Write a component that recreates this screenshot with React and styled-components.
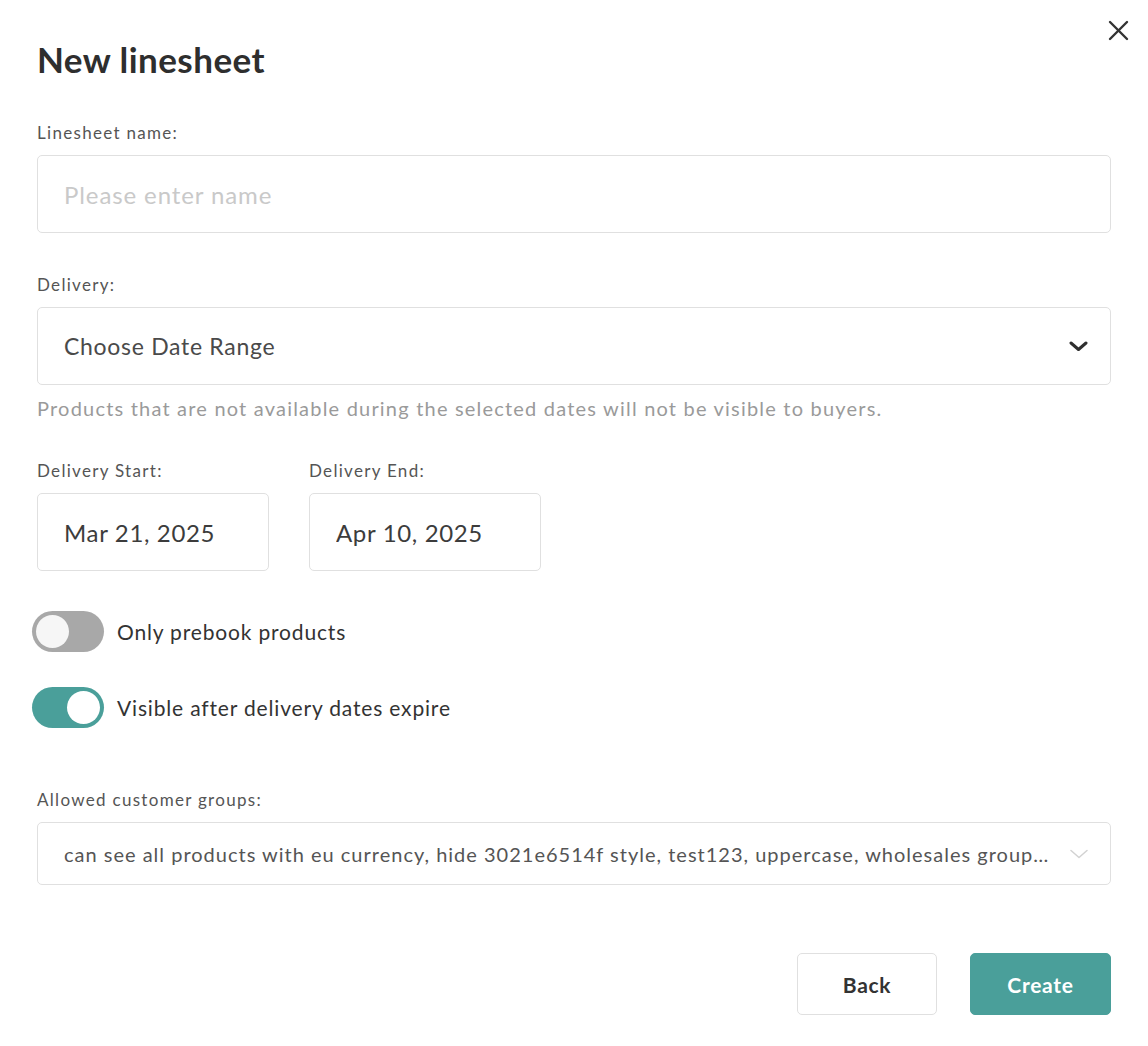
import React from "react";
import styled, { createGlobalStyle } from "styled-components";

const GlobalStyle = createGlobalStyle`
  html, body {
    margin: 0;
    padding: 0;
    background: #ffffff;
    font-family: Lato, "Open Sans", "Liberation Sans", sans-serif;
    color: #333333;
  }
  * { box-sizing: border-box; }
`;

const Dialog = styled.div`
  position: relative;
  width: 1148px;
  min-height: 1046px;
  padding: 38px 37px 31px 37px;
  display: flex;
  flex-direction: column;
  background: #fff;
`;

const CloseButton = styled.button`
  position: absolute;
  top: 20px;
  right: 19px;
  width: 21px;
  height: 21px;
  padding: 0;
  border: none;
  background: transparent;
  display: flex;
  align-items: center;
  justify-content: center;
  cursor: pointer;
`;

const Title = styled.h1`
  margin: 0;
  font-size: 35px;
  line-height: 42px;
  font-weight: 700;
  letter-spacing: 0.45px;
  color: #2e2e2e;
`;

const Field = styled.div`
  display: flex;
  flex-direction: column;
  margin-top: ${(p) => p.$top}px;
`;

const Label = styled.label`
  font-size: 17px;
  line-height: 20px;
  letter-spacing: 1.3px;
  color: #555555;
  margin-bottom: 12px;
`;

const Box = styled.div`
  height: ${(p) => p.$h || 78}px;
  width: ${(p) => (p.$w ? `${p.$w}px` : "100%")};
  border: 1.5px solid #e0e0e0;
  border-radius: 5px;
  background: #fff;
  display: flex;
  align-items: center;
  justify-content: space-between;
  gap: 20px;
  padding: 0 22px 0 26px;
`;

const Placeholder = styled.span`
  font-size: 24px;
  letter-spacing: 0.9px;
  color: #c9c9c9;
`;

const Value = styled.span`
  font-size: ${(p) => p.$size || 23}px;
  letter-spacing: ${(p) => p.$ls ?? 0.7}px;
  color: ${(p) => p.$color || "#4a4a4a"};
  white-space: nowrap;
  overflow: hidden;
  text-overflow: ellipsis;
`;

const Helper = styled.p`
  margin: 11px 0 0 0;
  font-size: 20px;
  line-height: 24px;
  letter-spacing: 1.2px;
  color: #9a9a9a;
`;

const DateRow = styled.div`
  display: flex;
  gap: 40px;
  margin-top: 41px;
`;

const DateField = styled.div`
  display: flex;
  flex-direction: column;
`;

const ToggleList = styled.div`
  display: flex;
  flex-direction: column;
  gap: 35px;
  margin-top: 40px;
  margin-left: -5px;
`;

const ToggleRow = styled.div`
  display: flex;
  align-items: center;
  gap: 13px;
`;

const Track = styled.div`
  width: 72px;
  height: 41px;
  border-radius: 21px;
  background: ${(p) => (p.$on ? "#4a9f9a" : "#a8a8a8")};
  padding: 4px;
  display: flex;
  justify-content: ${(p) => (p.$on ? "flex-end" : "flex-start")};
`;

const Knob = styled.div`
  width: 33px;
  height: 33px;
  border-radius: 50%;
  background: ${(p) => (p.$on ? "#ffffff" : "#f6f6f6")};
`;

const ToggleLabel = styled.span`
  font-size: 21px;
  letter-spacing: 0.83px;
  color: #333333;
`;

const Actions = styled.div`
  display: flex;
  justify-content: flex-end;
  gap: 33px;
  margin-top: 68px;
`;

const Button = styled.button`
  height: 62px;
  width: ${(p) => p.$w}px;
  border-radius: 5px;
  font-family: inherit;
  font-size: 21px;
  font-weight: 700;
  letter-spacing: 0.7px;
  cursor: pointer;
  border: 1.5px solid ${(p) => (p.$primary ? "#4a9f9a" : "#e0e0e0")};
  background: ${(p) => (p.$primary ? "#4a9f9a" : "#ffffff")};
  color: ${(p) => (p.$primary ? "#ffffff" : "#333333")};
`;

const Chevron = ({ light }) =>
  light ? (
    <svg width="18" height="10" viewBox="0 0 18 10" fill="none" style={{ flexShrink: 0 }}>
      <polyline points="1,1.5 9,8.5 17,1.5" stroke="#d2d2d2" strokeWidth="1.5" strokeLinecap="round" strokeLinejoin="round" />
    </svg>
  ) : (
    <svg width="19" height="10" viewBox="0 0 19 10" fill="none" style={{ flexShrink: 0 }}>
      <polyline points="2,2 9.5,8.5 17,2" stroke="#2f2f2f" strokeWidth="3" strokeLinecap="round" strokeLinejoin="round" />
    </svg>
  );

export default function App() {
  return (
    <>
      <GlobalStyle />
      <Dialog>
        <CloseButton aria-label="Close">
          <svg width="21" height="21" viewBox="0 0 21 21" fill="none">
            <line x1="2" y1="2" x2="19" y2="19" stroke="#333" strokeWidth="2.4" strokeLinecap="round" />
            <line x1="19" y1="2" x2="2" y2="19" stroke="#333" strokeWidth="2.4" strokeLinecap="round" />
          </svg>
        </CloseButton>

        <Title>New linesheet</Title>

        <Field $top={43}>
          <Label>Linesheet name:</Label>
          <Box>
            <Placeholder>Please enter name</Placeholder>
          </Box>
        </Field>

        <Field $top={42}>
          <Label>Delivery:</Label>
          <Box>
            <Value>Choose Date Range</Value>
            <Chevron />
          </Box>
          <Helper>Products that are not available during the selected dates will not be visible to buyers.</Helper>
        </Field>

        <DateRow>
          <DateField>
            <Label>Delivery Start:</Label>
            <Box $w={232}>
              <Value $size={24} $ls={0.65} $color="#3c3c3c">Mar 21, 2025</Value>
            </Box>
          </DateField>
          <DateField>
            <Label>Delivery End:</Label>
            <Box $w={232}>
              <Value $size={24} $ls={0.65} $color="#3c3c3c">Apr 10, 2025</Value>
            </Box>
          </DateField>
        </DateRow>

        <ToggleList>
          <ToggleRow>
            <Track>
              <Knob />
            </Track>
            <ToggleLabel>Only prebook products</ToggleLabel>
          </ToggleRow>
          <ToggleRow>
            <Track $on>
              <Knob $on />
            </Track>
            <ToggleLabel>Visible after delivery dates expire</ToggleLabel>
          </ToggleRow>
        </ToggleList>

        <Field $top={62}>
          <Label>Allowed customer groups:</Label>
          <Box $h={63}>
            <Value $size={20} $ls={1} $color="#555555">
              can see all products with eu currency, hide 3021e6514f style, test123, uppercase, wholesales group...
            </Value>
            <Chevron light />
          </Box>
        </Field>

        <Actions>
          <Button $w={140}>Back</Button>
          <Button $w={141} $primary>Create</Button>
        </Actions>
      </Dialog>
    </>
  );
}
